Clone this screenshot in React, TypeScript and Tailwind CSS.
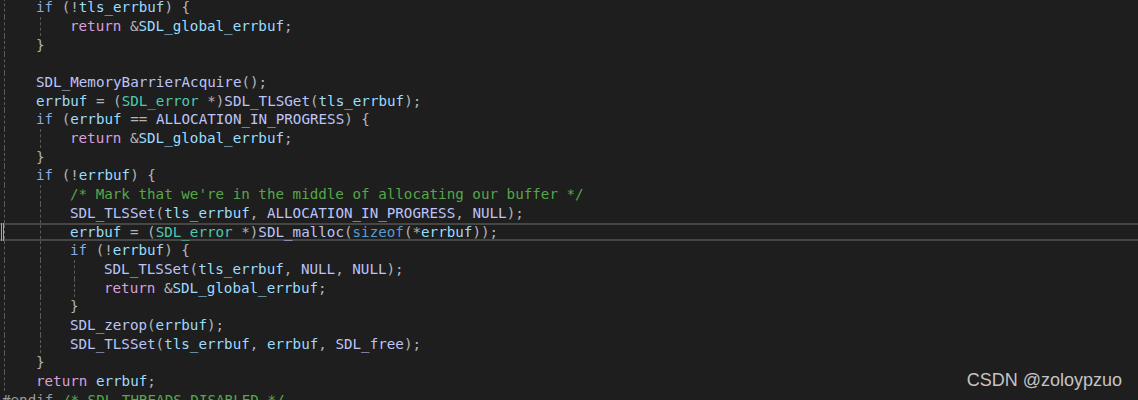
import React from "react";

type Tok = [string, string];

const kw = "text-[#86a8ec]";
const ret = "text-[#d8a0df]";
const v = "text-[#9cdcfe]";
const fn = "text-[#bcc4f8]";
const ty = "text-[#4ec9b0]";
const p = "text-[#b4b4b4]";
const cm = "text-[#57a64a]";
const pp = "text-[#9b9b9b]";
const sz = "text-[#569cd6]";

type Line = { indent: number; guides: number; toks: Tok[]; current?: boolean };

const lines: Line[] = [
  { indent: 1, guides: 1, toks: [["if", kw], [" (!", p], ["tls_errbuf", v], [") {", p]] },
  { indent: 2, guides: 2, toks: [["return", ret], [" &", p], ["SDL_global_errbuf", v], [";", p]] },
  { indent: 1, guides: 1, toks: [["}", p]] },
  { indent: 1, guides: 1, toks: [] },
  { indent: 1, guides: 1, toks: [["SDL_MemoryBarrierAcquire", fn], ["();", p]] },
  {
    indent: 1,
    guides: 1,
    toks: [["errbuf", v], [" = (", p], ["SDL_error", ty], [" *)", p], ["SDL_TLSGet", fn], ["(", p], ["tls_errbuf", v], [");", p]],
  },
  {
    indent: 1,
    guides: 1,
    toks: [["if", kw], [" (", p], ["errbuf", v], [" == ", p], ["ALLOCATION_IN_PROGRESS", fn], [") {", p]],
  },
  { indent: 2, guides: 2, toks: [["return", ret], [" &", p], ["SDL_global_errbuf", v], [";", p]] },
  { indent: 1, guides: 1, toks: [["}", p]] },
  { indent: 1, guides: 1, toks: [["if", kw], [" (!", p], ["errbuf", v], [") {", p]] },
  { indent: 2, guides: 2, toks: [["/* Mark that we're in the middle of allocating our buffer */", cm]] },
  {
    indent: 2,
    guides: 2,
    toks: [["SDL_TLSSet", fn], ["(", p], ["tls_errbuf", v], [", ", p], ["ALLOCATION_IN_PROGRESS", fn], [", ", p], ["NULL", fn], [");", p]],
  },
  {
    indent: 2,
    guides: 2,
    current: true,
    toks: [
      ["errbuf", v],
      [" = (", p],
      ["SDL_error", ty],
      [" *)", p],
      ["SDL_malloc", fn],
      ["(", p],
      ["sizeof", sz],
      ["(*", p],
      ["errbuf", v],
      ["));", p],
    ],
  },
  { indent: 2, guides: 2, toks: [["if", kw], [" (!", p], ["errbuf", v], [") {", p]] },
  {
    indent: 3,
    guides: 3,
    toks: [["SDL_TLSSet", fn], ["(", p], ["tls_errbuf", v], [", ", p], ["NULL", fn], [", ", p], ["NULL", fn], [");", p]],
  },
  { indent: 3, guides: 3, toks: [["return", ret], [" &", p], ["SDL_global_errbuf", v], [";", p]] },
  { indent: 2, guides: 2, toks: [["}", p]] },
  { indent: 2, guides: 2, toks: [["SDL_zerop", fn], ["(", p], ["errbuf", v], [");", p]] },
  {
    indent: 2,
    guides: 2,
    toks: [["SDL_TLSSet", fn], ["(", p], ["tls_errbuf", v], [", ", p], ["errbuf", v], [", ", p], ["SDL_free", fn], [");", p]],
  },
  { indent: 1, guides: 1, toks: [["}", p]] },
  { indent: 1, guides: 1, toks: [["return", ret], [" ", p], ["errbuf", v], [";", p]] },
  { indent: 0, guides: 0, toks: [["#endif", pp], [" /* SDL_THREADS_DISABLED */", cm]] },
];

function Indent({ index, guide }: { index: number; guide: boolean }) {
  const first = index === 0;
  return (
    <div
      className={
        (first ? "ml-[2px] w-[32px] " : "ml-[4px] w-[30px] ") +
        "h-full shrink-0 " +
        (guide ? "border-l border-dashed border-[#5a5a5a]" : "")
      }
    />
  );
}

function CodeLine({ line }: { line: Line }) {
  const blocks = Array.from({ length: line.indent }, (_, i) => i);
  if (line.current) {
    return (
      <div className="relative flex h-[18.7px] items-center whitespace-pre border-y-2 border-[#464646] pl-[2px]">
        <div className="absolute left-[1px] top-[-2px] bottom-[-2px] w-[3px] border-x border-[#a8a8a8]" />
        <div className="flex h-[14.7px] items-center">
          {blocks.map((i) => (
            <Indent key={i} index={i} guide={i < line.guides} />
          ))}
          {line.toks.map((t, i) => (
            <span key={i} className={t[1]}>
              {t[0]}
            </span>
          ))}
        </div>
      </div>
    );
  }
  return (
    <div className="flex h-[18.7px] items-center whitespace-pre pl-[2px]">
      {blocks.map((i) => (
        <Indent key={i} index={i} guide={i < line.guides} />
      ))}
      {line.toks.map((t, i) => (
        <span key={i} className={t[1]}>
          {t[0]}
        </span>
      ))}
    </div>
  );
}

export default function App() {
  return (
    <div className="relative h-[400px] w-[1138px] overflow-hidden bg-[#1e1e1e]">
      <div className="mt-[-1.75px] font-['DejaVu_Sans_Mono',monospace] text-[14.22px] leading-[18.7px]">
        {lines.map((l, i) => (
          <CodeLine key={i} line={l} />
        ))}
      </div>
      <div className="absolute right-[16px] top-[371px] font-['Liberation_Sans',Arial,sans-serif] text-[18px] leading-none text-[#c4c4c4]">
        CSDN @zoloypzuo
      </div>
    </div>
  );
}
